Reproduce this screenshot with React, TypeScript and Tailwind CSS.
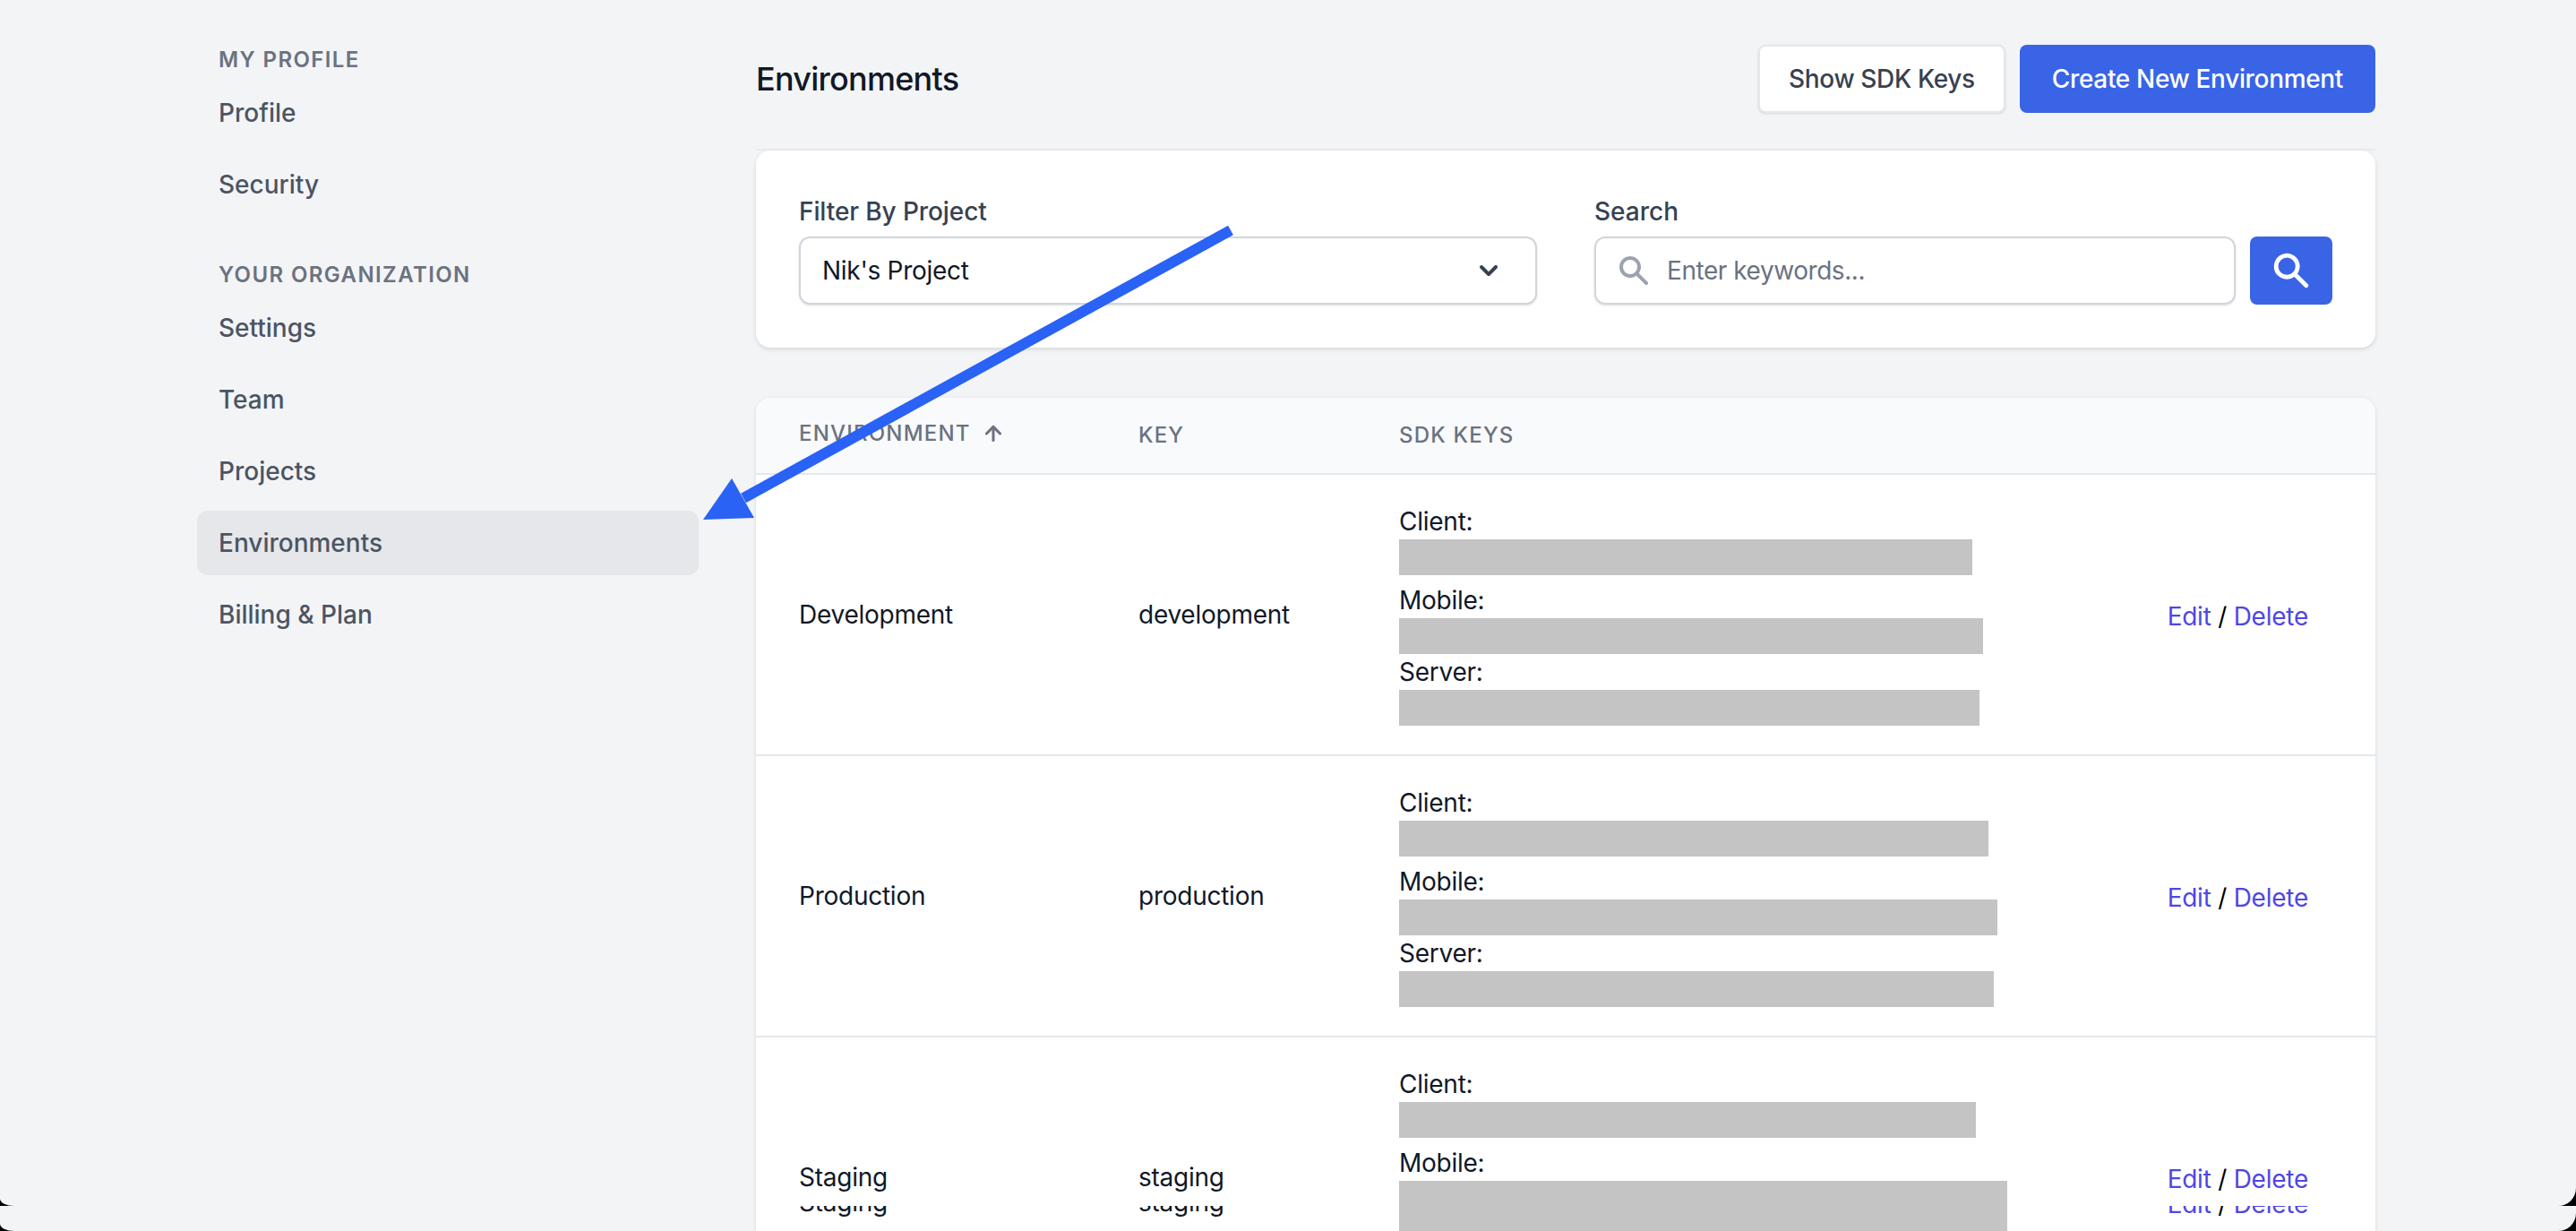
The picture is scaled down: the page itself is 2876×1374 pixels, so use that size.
import React from "react"
import { ArrowUp } from "lucide-react"

const searchPath =
  "M8 4a4 4 0 100 8 4 4 0 000-8zM2 8a6 6 0 1110.89 3.476l4.817 4.817a1 1 0 01-1.414 1.414l-4.816-4.816A6 6 0 012 8z"

type Row = { name: string; key: string; bars: number[] }

const rows: Row[] = [
  { name: "Development", key: "development", bars: [640, 652, 648] },
  { name: "Production", key: "production", bars: [658, 668, 664] },
  { name: "Staging", key: "staging", bars: [644, 679, 660] },
]

const SearchIcon = ({ className }: { className: string }) => (
  <svg viewBox="0 0 20 20" fill="currentColor" className={className}>
    <path fillRule="evenodd" clipRule="evenodd" d={searchPath} />
  </svg>
)

const NavItem = ({ label, active }: { label: string; active?: boolean }) => (
  <div
    className={
      "flex h-[72px] items-center rounded-xl px-6 text-[28px] font-medium text-[#4b5563] " +
      (active ? "bg-[#e5e7eb]" : "")
    }
  >
    {label}
  </div>
)

const NavHeading = ({ label }: { label: string }) => (
  <div className="flex h-10 items-center px-6 text-[24px] font-semibold uppercase tracking-[1.4px] text-[#6b7280]">
    {label}
  </div>
)

const Sidebar = () => (
  <aside className="w-[560px] shrink-0 pt-[47px]">
    <NavHeading label="My Profile" />
    <div className="mt-[3px] flex flex-col gap-2">
      <NavItem label="Profile" />
      <NavItem label="Security" />
    </div>
    <div className="mt-[45px]">
      <NavHeading label="Your Organization" />
    </div>
    <div className="mt-[3px] flex flex-col gap-2">
      <NavItem label="Settings" />
      <NavItem label="Team" />
      <NavItem label="Projects" />
      <NavItem label="Environments" active />
      <NavItem label="Billing & Plan" />
    </div>
  </aside>
)

const Header = () => (
  <div className="flex items-center justify-between border-b-2 border-[#e9eaee] pb-10 pt-[50px]">
    <h1 className="text-[36px] font-medium tracking-[-0.75px] text-[#111827]">Environments</h1>
    <div className="flex gap-4">
      <button className="h-[76px] rounded-lg border-2 border-[#e5e7eb] bg-white px-8 text-[28px] font-medium tracking-[-0.35px] text-[#374151] shadow-sm">
        Show SDK Keys
      </button>
      <button className="h-[76px] rounded-lg bg-[#3964e5] px-9 text-[28px] font-medium tracking-[-0.34px] text-white">
        Create New Environment
      </button>
    </div>
  </div>
)

const Filters = () => (
  <div className="grid grid-cols-2 gap-16 rounded-2xl bg-white p-12 shadow-[0_2px_5px_rgba(0,0,0,0.12)]">
    <div>
      <div className="mb-2 h-10 text-[28px] font-medium leading-10 tracking-[-0.1px] text-[#374151]">Filter By Project</div>
      <div className="flex h-[76px] items-center justify-between rounded-xl border-2 border-[#d1d5db] pl-6 pr-[32px] text-[28px] tracking-[-0.28px] text-[#111827] shadow-sm">
        Nik's Project
        <svg viewBox="0 0 20 20" fill="currentColor" className="h-10 w-10 text-[#374151]">
          <path
            fillRule="evenodd"
            clipRule="evenodd"
            d="M5.293 7.293a1 1 0 011.414 0L10 10.586l3.293-3.293a1 1 0 111.414 1.414l-4 4a1 1 0 01-1.414 0l-4-4a1 1 0 010-1.414z"
          />
        </svg>
      </div>
    </div>
    <div>
      <div className="mb-2 h-10 text-[28px] font-medium leading-10 text-[#374151]">Search</div>
      <div className="flex gap-4">
        <div className="flex h-[76px] flex-1 items-center gap-[17px] rounded-xl border-2 border-[#d1d5db] pl-[22px] text-[28px] tracking-[-0.45px] text-[#6b7280] shadow-sm">
          <SearchIcon className="h-10 w-10 text-[#9ca3af]" />
          Enter keywords...
        </div>
        <button className="flex h-[76px] w-[92px] items-center justify-center rounded-lg bg-[#3964e5] text-white">
          <SearchIcon className="h-12 w-12" />
        </button>
      </div>
    </div>
  </div>
)

const TableRow = ({ row }: { row: Row }) => (
  <div className="grid h-[314px] grid-cols-[427px_291px_1fr_auto] items-center border-b-2 border-[#e5e7eb] text-[28px] leading-10 tracking-[-0.25px] text-[#111827]">
    <div className="pl-12">{row.name}</div>
    <div>{row.key}</div>
    <div>
      <div>Client:</div>
      <div className="mb-2 h-10 bg-[#c4c4c4]" style={{ width: row.bars[0] }} />
      <div>Mobile:</div>
      <div className="h-10 bg-[#c4c4c4]" style={{ width: row.bars[1] }} />
      <div>Server:</div>
      <div className="h-10 bg-[#c4c4c4]" style={{ width: row.bars[2] }} />
    </div>
    <div className="pr-[75px] pt-[3px]">
      <span className="text-[#4f46e5]">Edit</span>
      <span className="text-black"> / </span>
      <span className="text-[#4f46e5]">Delete</span>
    </div>
  </div>
)

const Table = () => (
  <div className="mt-14 rounded-2xl bg-white shadow-[0_1px_4px_rgba(0,0,0,0.12)]">
    <div className="grid h-[86px] grid-cols-[427px_291px_1fr] items-center rounded-t-2xl border-b-2 border-[#e5e7eb] bg-[#f9fafb] text-[24px] font-medium uppercase tracking-wider text-[#6b7280]">
      <div className="flex items-center pb-1 pl-12">
        Environment
        <ArrowUp size={26} strokeWidth={2.8} className="ml-3" />
      </div>
      <div>Key</div>
      <div>SDK Keys</div>
    </div>
    {rows.map((row) => (
      <TableRow key={row.key} row={row} />
    ))}
  </div>
)

// arrow drawn on top of the screenshot
const Annotation = () => (
  <svg viewBox="0 0 620 350" className="absolute left-[770px] top-[245px] h-[350px] w-[620px]">
    <line x1="604" y1="12" x2="60" y2="311" stroke="#2962f5" strokeWidth="12" />
    <polygon points="15,335 47,289 72,333" fill="#2962f5" />
  </svg>
)

export default function App() {
  return (
    <div className="h-[1374px] w-[2876px] overflow-hidden bg-black font-['Inter',sans-serif]">
      <div className="h-[1346px] overflow-hidden rounded-bl-[16px_8px] rounded-br-[20px]">
        <div className="relative flex h-[1600px] bg-[#f3f4f6] pl-[220px]">
          <Sidebar />
          <main className="ml-16 w-[1808px]">
            <Header />
            <Filters />
            <Table />
          </main>
          <Annotation />
        </div>
      </div>
      {/* the capture is stitched: last 28px repeat the staging row from just above the seam */}
      <div className="h-[28px] overflow-hidden rounded-bl-[16px_8px] rounded-br-[20px] bg-[#f3f4f6] pl-[844px]">
        <div className="w-[1808px] bg-white shadow-[0_1px_4px_rgba(0,0,0,0.12)]">
          <div className="-mt-[160px]">
            <TableRow row={rows[2]} />
          </div>
        </div>
      </div>
    </div>
  )
}
